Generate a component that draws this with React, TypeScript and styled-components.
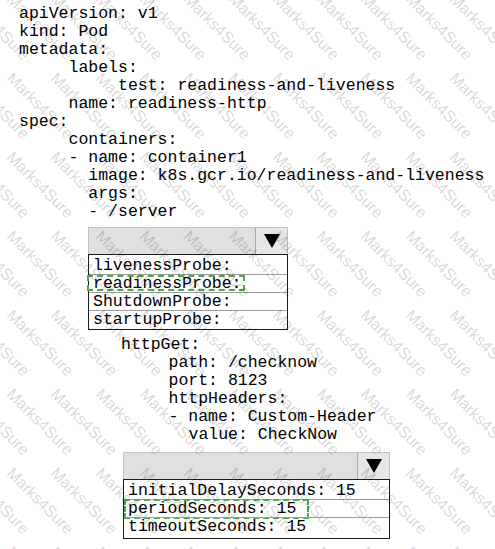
import React from "react";
import styled, { createGlobalStyle, css } from "styled-components";

const GlobalStyle = createGlobalStyle`
  html, body { margin: 0; padding: 0; background: #fff; }
  body { width: 495px; height: 549px; overflow: hidden; }
`;

const Page = styled.div`
  position: relative;
  width: 495px;
  height: 549px;
  box-sizing: border-box;
  padding: 5px 0 0 19px;
  background: #fff;
  font-family: "Liberation Mono", "Courier New", monospace;
  font-size: 16.5px;
  color: #000;
  overflow: hidden;
`;

const Line = styled.div<{ $indent?: number }>`
  height: 18px;
  line-height: 18px;
  white-space: pre;
  padding-left: ${(p) => p.$indent ?? 0}px;
`;

const Block = styled.div<{ $top: number }>`
  margin-top: ${(p) => p.$top}px;
`;

const Select = styled.div<{ $left: number; $width: number; $top: number }>`
  margin-left: ${(p) => p.$left}px;
  margin-top: ${(p) => p.$top}px;
  width: ${(p) => p.$width}px;
`;

const SelectHead = styled.div`
  display: flex;
  box-sizing: border-box;
  height: 27px;
  background: #e0e0e0;
  border: 1px solid #c2c2c2;
  border-bottom: none;
`;

const Field = styled.div`
  flex: 1;
`;

const ArrowButton = styled.div`
  box-sizing: border-box;
  width: 32px;
  display: flex;
  align-items: center;
  justify-content: center;
  border-left: 1px solid #a8a8a8;
  background: #e6e6e6;
`;

const OptionList = styled.div<{ $padBottom: number }>`
  border: 1px solid #1c1c1c;
  background: #fff;
  padding: 2px 0 ${(p) => p.$padBottom}px;
`;

type Box = { left: number; top: number; width: number; height: number };

const Option = styled.div<{ $hl?: Box }>`
  position: relative;
  height: 17px;
  line-height: 17px;
  padding: 0 4px;
  white-space: pre;
  & + & {
    border-top: 1px solid #9c9c9c;
  }
  ${(p) =>
    p.$hl &&
    css`
      &::after {
        content: "";
        position: absolute;
        box-sizing: border-box;
        left: ${p.$hl.left}px;
        top: ${p.$hl.top}px;
        width: ${p.$hl.width}px;
        height: ${p.$hl.height}px;
        border: 2px dashed #4ea94e;
      }
    `}
`;

const Watermark = styled.div`
  position: absolute;
  inset: 0;
  pointer-events: none;
  overflow: hidden;
`;

const Mark = styled.span`
  position: absolute;
  font-family: "Liberation Sans", Arial, sans-serif;
  font-size: 16px;
  line-height: 16px;
  color: rgba(0, 0, 0, 0.17);
  transform: rotate(45deg);
  transform-origin: 0 0;
  white-space: nowrap;
`;

const Arrow = () => (
  <svg width="16" height="14" viewBox="0 0 16 14">
    <polygon points="0,0 16,0 8,14" fill="#000" />
  </svg>
);

type Opt = { text: string; hl?: Box };

const Dropdown = ({
  left,
  top,
  width,
  padBottom,
  options,
}: {
  left: number;
  top: number;
  width: number;
  padBottom: number;
  options: Opt[];
}) => (
  <Select $left={left} $top={top} $width={width}>
    <SelectHead>
      <Field />
      <ArrowButton>
        <Arrow />
      </ArrowButton>
    </SelectHead>
    <OptionList $padBottom={padBottom}>
      {options.map((o) => (
        <Option key={o.text} $hl={o.hl}>
          {o.text}
        </Option>
      ))}
    </OptionList>
  </Select>
);

const topLines: [number, string][] = [
  [0, "apiVersion: v1"],
  [0, "kind: Pod"],
  [0, "metadata:"],
  [49.5, "labels:"],
  [99, "test: readiness-and-liveness"],
  [49.5, "name: readiness-http"],
  [0, "spec:"],
  [49.5, "containers:"],
  [49.5, "- name: container1"],
  [69.3, "image: k8s.gcr.io/readiness-and-liveness"],
  [69.3, "args:"],
  [69.3, "- /server"],
];

const probeLines: [number, string][] = [
  [102, "httpGet:"],
  [149.5, "path: /checknow"],
  [149.5, "port: 8123"],
  [149.5, "httpHeaders:"],
  [149.5, "- name: Custom-Header"],
  [169.5, "value: CheckNow"],
];

const marks: { x: number; y: number }[] = [];
for (let j = 0; j < 8; j++) {
  for (let i = -2; i < 11; i++) {
    marks.push({ x: 15 + 44.3 * i, y: -9 + 79 * j });
  }
}

export default function App() {
  return (
    <>
      <GlobalStyle />
      <Page>
        {topLines.map(([indent, text], i) => (
          <Line key={i} $indent={indent}>
            {text}
          </Line>
        ))}
        <Dropdown
          left={69}
          top={6}
          width={200}
          padBottom={1}
          options={[
            { text: "livenessProbe:" },
            {
              text: "readinessProbe:",
              hl: { left: -2, top: 0, width: 158, height: 16 },
            },
            { text: "ShutdownProbe:" },
            { text: "startupProbe:" },
          ]}
        />
        <Block $top={6}>
          {probeLines.map(([indent, text], i) => (
            <Line key={i} $indent={indent}>
              {text}
            </Line>
          ))}
        </Block>
        <Dropdown
          left={104}
          top={8}
          width={267}
          padBottom={3}
          options={[
            { text: "initialDelaySeconds: 15" },
            {
              text: "periodSeconds: 15",
              hl: { left: 0, top: -1, width: 185, height: 20 },
            },
            { text: "timeoutSeconds: 15" },
          ]}
        />
        <Watermark>
          {marks.map((m, k) => (
            <Mark key={k} style={{ left: m.x, top: m.y }}>
              Marks4Sure
            </Mark>
          ))}
        </Watermark>
      </Page>
    </>
  );
}
